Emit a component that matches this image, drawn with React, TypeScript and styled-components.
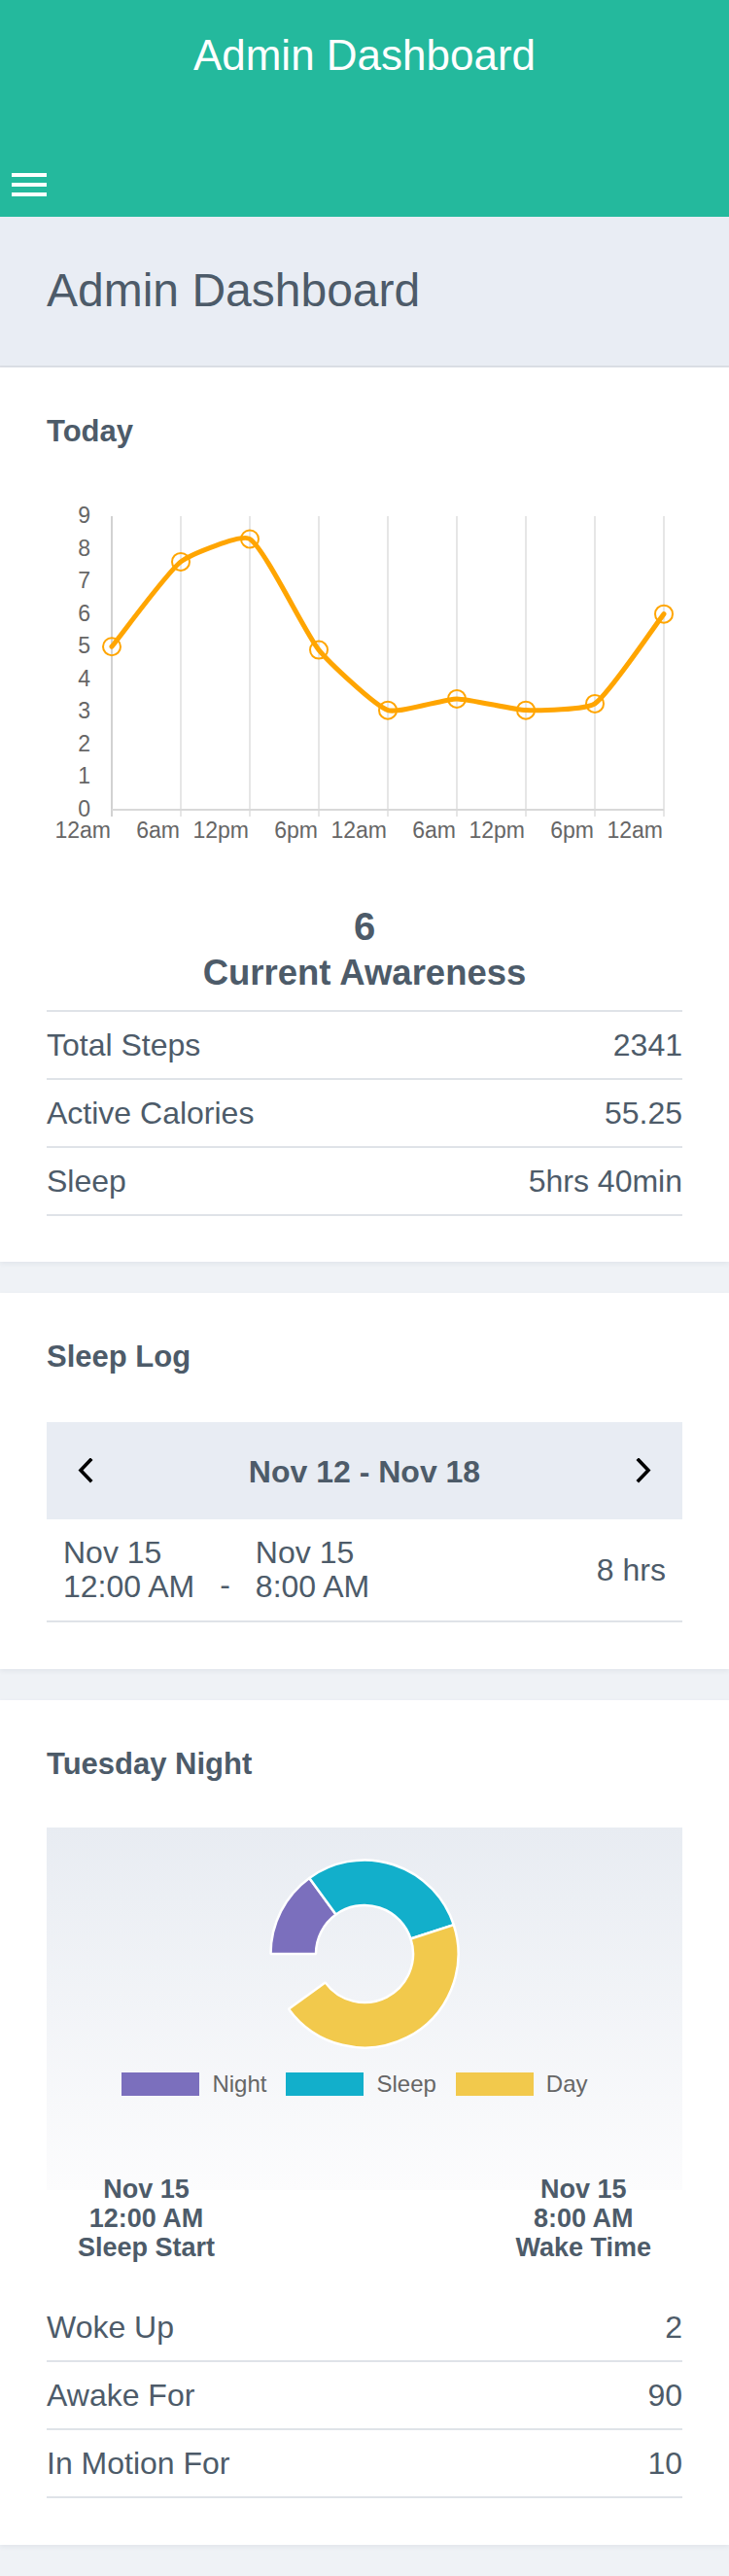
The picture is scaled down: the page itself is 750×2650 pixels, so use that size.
import React from "react";
import styled, { createGlobalStyle } from "styled-components";

const GlobalStyle = createGlobalStyle`
  html, body { margin: 0; padding: 0; }
  body {
    background: #eff2f6;
    font-family: "Liberation Sans", Arial, Helvetica, sans-serif;
    color: #4d5b69;
  }
  * { box-sizing: border-box; }
`;

const TEXT = "#4d5b69";
const LINE = "#dfe3e8";

const Page = styled.div`
  width: 750px;
  padding-bottom: 32px;
  display: flex;
  flex-direction: column;
  gap: 32px;
`;

const Top = styled.div`
  display: flex;
  flex-direction: column;
`;

const Header = styled.header`
  height: 223px;
  background: #24b99d;
  display: flex;
  flex-direction: column;
  padding: 31px 12px 21px;
`;

const HeaderTitle = styled.h1`
  margin: 0;
  font-size: 44px;
  line-height: 52px;
  font-weight: 400;
  color: #fff;
  text-align: center;
`;

const Burger = styled.button`
  margin-top: auto;
  width: 36px;
  height: 24px;
  padding: 0;
  border: 0;
  background: transparent;
  display: flex;
  flex-direction: column;
  justify-content: space-between;
`;

const BurgerBar = styled.span`
  display: block;
  width: 36px;
  height: 4px;
  background: #fff;
`;

const Band = styled.div`
  background: #e9edf4;
  border-bottom: 2px solid #dcdfe5;
  padding: 48px 48px 49px;
`;

const PageTitle = styled.h2`
  margin: 0;
  font-size: 48px;
  line-height: 56px;
  font-weight: 400;
  color: ${TEXT};
`;

const Card = styled.section<{ $bottom?: number }>`
  background: #fff;
  padding: 47px 48px ${(p) => p.$bottom ?? 48}px;
  box-shadow: 0 2px 5px rgba(40, 60, 90, 0.07);
  display: flex;
  flex-direction: column;
`;

const CardTitle = styled.h3`
  margin: 0;
  font-size: 31px;
  line-height: 37px;
  font-weight: 700;
  color: ${TEXT};
`;

const ChartSvg = styled.svg`
  display: block;
  margin-top: 29px;
  overflow: visible;
`;

const Awareness = styled.div`
  margin-top: 50px;
  display: flex;
  flex-direction: column;
  align-items: center;
  color: ${TEXT};
  font-weight: 700;
`;

const BigNumber = styled.div`
  font-size: 40px;
  line-height: 44px;
`;

const AwarenessLabel = styled.div`
  margin-top: 4px;
  font-size: 36.5px;
  line-height: 44px;
`;

const StatList = styled.div<{ $top?: boolean; $gap: number }>`
  margin-top: ${(p) => p.$gap}px;
  border-top: ${(p) => (p.$top ? `2px solid ${LINE}` : "0")};
  display: flex;
  flex-direction: column;
`;

const StatRow = styled.div`
  height: 70px;
  border-bottom: 2px solid ${LINE};
  display: flex;
  align-items: center;
  justify-content: space-between;
  font-size: 32px;
  color: ${TEXT};
`;

const WeekNav = styled.div`
  margin-top: 49px;
  height: 100px;
  background: #e8ecf3;
  display: flex;
  align-items: center;
  justify-content: space-between;
  padding: 0 32px;
`;

const NavButton = styled.button`
  width: 16px;
  height: 26px;
  padding: 0;
  border: 0;
  background: transparent;
  display: flex;
`;

const WeekLabel = styled.div`
  font-size: 32px;
  font-weight: 700;
  color: ${TEXT};
  padding-top: 2px;
`;

const Entry = styled.div`
  height: 106px;
  border-bottom: 2px solid ${LINE};
  display: flex;
  align-items: center;
  padding: 0 17px;
  font-size: 32px;
  color: ${TEXT};
`;

const EntryTime = styled.div`
  line-height: 35px;
  display: flex;
  flex-direction: column;
`;

const Dash = styled.div`
  align-self: flex-end;
  line-height: 35px;
  padding: 0 26px 19px;
`;

const Duration = styled.div`
  margin-left: auto;
`;

const NightPanel = styled.div`
  margin-top: 47px;
  padding-top: 30px;
  background: linear-gradient(
    180deg,
    #e8ecf2 0px,
    #fcfcfd 373px,
    rgba(255, 255, 255, 0) 373px
  );
  display: flex;
  flex-direction: column;
  align-items: center;
`;

const Donut = styled.svg`
  display: block;
  overflow: visible;
`;

const Legend = styled.div`
  margin-top: 22px;
  padding-right: 20px;
  display: flex;
  align-items: center;
  gap: 20px;
`;

const LegendItem = styled.div`
  display: flex;
  align-items: center;
  gap: 13px;
  font-size: 24px;
  line-height: 24px;
  color: #666;
`;

const Swatch = styled.span<{ $color: string }>`
  width: 80px;
  height: 24px;
  background: ${(p) => p.$color};
`;

const Times = styled.div`
  align-self: stretch;
  margin-top: 81px;
  padding: 0 32px;
  display: flex;
  justify-content: space-between;
`;

const TimeBlock = styled.div`
  display: flex;
  flex-direction: column;
  align-items: center;
  font-size: 27px;
  line-height: 30px;
  font-weight: 700;
  color: ${TEXT};
`;

/* ---------- line chart ---------- */

const values = [5, 7.6, 8.3, 4.9, 3.05, 3.4, 3.05, 3.25, 6];
const xLabels = ["12am", "6am", "12pm", "6pm", "12am", "6am", "12pm", "6pm", "12am"];
const X0 = 67;
const DX = 71;
const Y0 = 342;
const UNIT = 33.56;

type Pt = { x: number; y: number };

function splinePath(pts: Pt[], t: number) {
  const cps = pts.map((cur, i) => {
    const prev = pts[i - 1] ?? cur;
    const next = pts[i + 1] ?? cur;
    const d01 = Math.hypot(cur.x - prev.x, cur.y - prev.y);
    const d12 = Math.hypot(next.x - cur.x, next.y - cur.y);
    const sum = d01 + d12 || 1;
    const fa = (t * d01) / sum;
    const fb = (t * d12) / sum;
    return {
      prev: { x: cur.x - fa * (next.x - prev.x), y: cur.y - fa * (next.y - prev.y) },
      next: { x: cur.x + fb * (next.x - prev.x), y: cur.y + fb * (next.y - prev.y) },
    };
  });
  let d = `M${pts[0].x},${pts[0].y}`;
  for (let i = 0; i < pts.length - 1; i++) {
    const a = cps[i].next;
    const b = cps[i + 1].prev;
    const p = pts[i + 1];
    d += ` C${a.x.toFixed(1)},${a.y.toFixed(1)} ${b.x.toFixed(1)},${b.y.toFixed(1)} ${p.x},${p.y.toFixed(1)}`;
  }
  return d;
}

function LineChart() {
  const pts = values.map((v, i) => ({ x: X0 + i * DX, y: Y0 - v * UNIT }));
  return (
    <ChartSvg width={654} height={390} viewBox="0 0 654 390">
      {xLabels.map((_, i) => (
        <line
          key={`g${i}`}
          x1={X0 + i * DX}
          x2={X0 + i * DX}
          y1={40}
          y2={349}
          stroke={i === 0 ? "#d2d2d2" : "#e6e6e6"}
          strokeWidth={2}
        />
      ))}
      <line x1={X0} x2={X0 + 8 * DX} y1={Y0} y2={Y0} stroke="#d9d9d9" strokeWidth={2} />
      {Array.from({ length: 10 }, (_, v) => (
        <text
          key={`y${v}`}
          x={45}
          y={Y0 - v * UNIT + 7}
          textAnchor="end"
          fontSize={23}
          fill="#666"
          fontFamily="Liberation Sans, Arial, sans-serif"
        >
          {v}
        </text>
      ))}
      {xLabels.map((l, i) => (
        <text
          key={`x${i}`}
          x={X0 + i * DX - 1}
          y={371}
          textAnchor="end"
          fontSize={23}
          fill="#666"
          fontFamily="Liberation Sans, Arial, sans-serif"
        >
          {l}
        </text>
      ))}
      <path
        d={splinePath(pts, 0.17)}
        fill="none"
        stroke="#ffa500"
        strokeWidth={5}
        strokeLinejoin="round"
        strokeLinecap="round"
      />
      {pts.map((p, i) => (
        <circle key={`c${i}`} cx={p.x} cy={p.y} r={9} fill="none" stroke="#ffa500" strokeWidth={2} />
      ))}
    </ChartSvg>
  );
}

/* ---------- doughnut ---------- */

const CX = 100;
const CY = 100;
const R_OUT = 96.5;
const R_IN = 50;

function polar(a: number, r: number) {
  const rad = (a * Math.PI) / 180;
  return `${(CX + r * Math.sin(rad)).toFixed(2)},${(CY - r * Math.cos(rad)).toFixed(2)}`;
}

function arcPath(a0: number, a1: number) {
  const large = a1 - a0 > 180 ? 1 : 0;
  return [
    `M${polar(a0, R_OUT)}`,
    `A${R_OUT},${R_OUT} 0 ${large} 1 ${polar(a1, R_OUT)}`,
    `L${polar(a1, R_IN)}`,
    `A${R_IN},${R_IN} 0 ${large} 0 ${polar(a0, R_IN)}`,
    "Z",
  ].join(" ");
}

const segments = [
  { label: "Night", color: "#7b6fbd", from: 270, to: 324 },
  { label: "Sleep", color: "#12afcb", from: 324, to: 432 },
  { label: "Day", color: "#f2c94c", from: 432, to: 594 },
];

function Doughnut() {
  return (
    <Donut width={200} height={200} viewBox="0 0 200 200">
      {segments.map((s) => (
        <path
          key={s.label}
          d={arcPath(s.from, s.to)}
          fill={s.color}
          stroke="#fff"
          strokeWidth={2.5}
          strokeLinejoin="bevel"
        />
      ))}
    </Donut>
  );
}

function Chevron({ dir }: { dir: "left" | "right" }) {
  const pts = dir === "left" ? "13,2 3,12.5 13,23" : "3,2 13,12.5 3,23";
  return (
    <svg width={16} height={26} viewBox="0 0 16 26">
      <polyline points={pts} fill="none" stroke="#000" strokeWidth={3.6} strokeLinecap="square" />
    </svg>
  );
}

export default function App() {
  return (
    <>
      <GlobalStyle />
      <Page>
        <Top>
          <Header>
            <HeaderTitle>Admin Dashboard</HeaderTitle>
            <Burger aria-label="menu">
              <BurgerBar />
              <BurgerBar />
              <BurgerBar />
            </Burger>
          </Header>
          <Band>
            <PageTitle>Admin Dashboard</PageTitle>
          </Band>
          <Card $bottom={47}>
            <CardTitle>Today</CardTitle>
            <LineChart />
            <Awareness>
              <BigNumber>6</BigNumber>
              <AwarenessLabel>Current Awareness</AwarenessLabel>
            </Awareness>
            <StatList $top $gap={16}>
              <StatRow>
                <span>Total Steps</span>
                <span>2341</span>
              </StatRow>
              <StatRow>
                <span>Active Calories</span>
                <span>55.25</span>
              </StatRow>
              <StatRow>
                <span>Sleep</span>
                <span>5hrs 40min</span>
              </StatRow>
            </StatList>
          </Card>
        </Top>

        <Card>
          <CardTitle>Sleep Log</CardTitle>
          <WeekNav>
            <NavButton aria-label="previous week">
              <Chevron dir="left" />
            </NavButton>
            <WeekLabel>Nov 12 - Nov 18</WeekLabel>
            <NavButton aria-label="next week">
              <Chevron dir="right" />
            </NavButton>
          </WeekNav>
          <Entry>
            <EntryTime>
              <span>Nov 15</span>
              <span>12:00 AM</span>
            </EntryTime>
            <Dash>-</Dash>
            <EntryTime>
              <span>Nov 15</span>
              <span>8:00 AM</span>
            </EntryTime>
            <Duration>8 hrs</Duration>
          </Entry>
        </Card>

        <Card>
          <CardTitle>Tuesday Night</CardTitle>
          <NightPanel>
            <Doughnut />
            <Legend>
              {segments.map((s) => (
                <LegendItem key={s.label}>
                  <Swatch $color={s.color} />
                  {s.label}
                </LegendItem>
              ))}
            </Legend>
            <Times>
              <TimeBlock>
                <span>Nov 15</span>
                <span>12:00 AM</span>
                <span>Sleep Start</span>
              </TimeBlock>
              <TimeBlock>
                <span>Nov 15</span>
                <span>8:00 AM</span>
                <span>Wake Time</span>
              </TimeBlock>
            </Times>
          </NightPanel>
          <StatList $gap={33}>
            <StatRow>
              <span>Woke Up</span>
              <span>2</span>
            </StatRow>
            <StatRow>
              <span>Awake For</span>
              <span>90</span>
            </StatRow>
            <StatRow>
              <span>In Motion For</span>
              <span>10</span>
            </StatRow>
          </StatList>
        </Card>
      </Page>
    </>
  );
}
